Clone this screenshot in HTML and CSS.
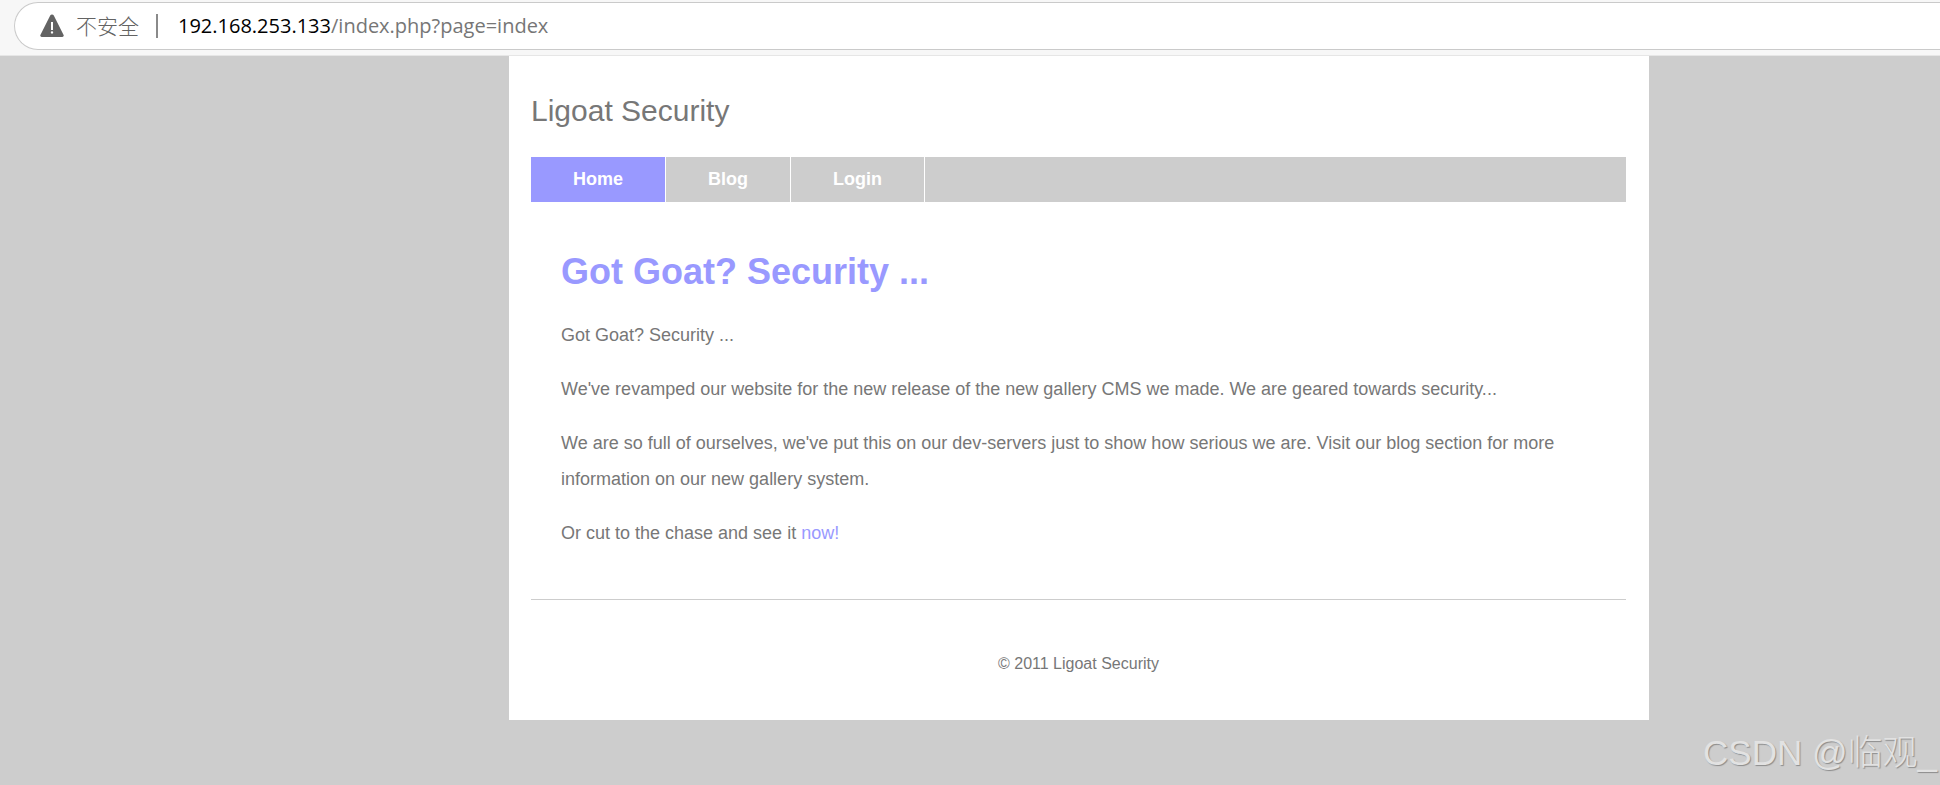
FILE: index.html
```html
<!DOCTYPE html>
<html lang="en">
<head>
<meta charset="utf-8">
<title>Ligoat Security</title>
<link rel="stylesheet" href="styles.css">
</head>
<body>
<div class="toolbar">
  <div class="address">
    <svg class="warn" viewBox="0 0 24 24" aria-hidden="true">
      <path fill="#636363" fill-rule="evenodd" d="M10.2 1.6a2 2 0 0 1 3.6 0l9.8 19.3a1.5 1.5 0 0 1-1.4 2.1H1.8a1.5 1.5 0 0 1-1.4-2.1ZM11 8v8h2V8Zm1 9.2a1.2 1.2 0 1 0 0 2.4 1.2 1.2 0 0 0 0-2.4Z"/>
    </svg>
    <span class="insecure" lang="zh">不安全</span>
    <span class="divider"></span>
    <span class="url"><span class="host">192.168.253.133</span>/index.php?page=index</span>
  </div>
</div>
<div class="viewport">
  <div class="page">
    <header class="site-header">Ligoat Security</header>
    <nav class="menu">
      <a class="menu-item active" href="#">Home</a>
      <a class="menu-item" href="#">Blog</a>
      <a class="menu-item" href="#">Login</a>
    </nav>
    <main class="content">
      <h1>Got Goat? Security ...</h1>
      <p>Got Goat? Security ...</p>
      <p>We've revamped our website for the new release of the new gallery CMS we made. We are geared towards security...</p>
      <p>We are so full of ourselves, we've put this on our dev-servers just to show how serious we are. Visit our blog section for more information on our new gallery system.</p>
      <p>Or cut to the chase and see it <a href="#">now!</a></p>
    </main>
    <footer class="footer">© 2011 Ligoat Security</footer>
  </div>
</div>
<div class="watermark" lang="zh">CSDN @临观_</div>
</body>
</html>
```
FILE: styles.css
```css
* {
  box-sizing: border-box;
}

body {
  margin: 0;
  min-height: 100vh;
  position: relative;
  background: #cdcdcd;
  color: #777;
  font: 18px/36px "Liberation Sans", Arial, sans-serif;
}

a {
  color: #99f;
  text-decoration: none;
}

.toolbar {
  padding: 2px 0 5px 14px;
  overflow: hidden;
  background: #f7f7f7;
  border-bottom: 1px solid #e6e6e6;
}

.address {
  display: flex;
  align-items: center;
  height: 48px;
  padding-left: 25px;
  border: 1px solid #cacaca;
  border-right: 0;
  border-radius: 24px 0 0 24px;
  background: #fff;
}

.warn {
  width: 24px;
  height: 24px;
}

.insecure {
  margin-left: 12px;
  padding-bottom: 2px;
  color: #636363;
  font: 300 21px/24px "Noto Sans CJK SC", sans-serif;
}

.divider {
  width: 2px;
  height: 24px;
  margin: 0 20px 0 17px;
  background: #8a8a8a;
}

.url {
  color: #767676;
  font: 20px/24px "Open Sans", "Noto Sans", sans-serif;
}

.host {
  color: #000;
}

.viewport {
  display: grid;
  grid-template-columns: 509fr 1140fr 291fr;
}

.page {
  grid-column: 2;
  padding: 0 23px 0 22px;
  background: #fff;
}

.site-header {
  padding: 37px 0 28px;
  font-size: 30px;
}

.menu {
  display: flex;
  background: #cdcdcd;
}

.menu-item {
  padding: 0 42px;
  border-right: 1px solid #fff;
  color: #fff;
  font-weight: bold;
  line-height: 45px;
}

.menu-item.active {
  background: #99f;
}

.content {
  padding: 48px 30px;
}

h1 {
  margin: 0 0 23px;
  color: #99f;
  font-size: 36px;
  line-height: 44px;
}

p {
  margin: 0 0 18px;
}

p:last-child {
  margin-bottom: 0;
}

.footer {
  padding: 46px 0 38px;
  border-top: 1px solid #cdcdcd;
  font-size: 16px;
  text-align: center;
}

.watermark {
  position: absolute;
  right: 3px;
  bottom: 8px;
  color: #e2e2e2;
  font: 300 35px/48px "Liberation Sans", "Noto Sans CJK SC", sans-serif;
  text-shadow: 1px 1px 1px #8c8c8c;
}
```
